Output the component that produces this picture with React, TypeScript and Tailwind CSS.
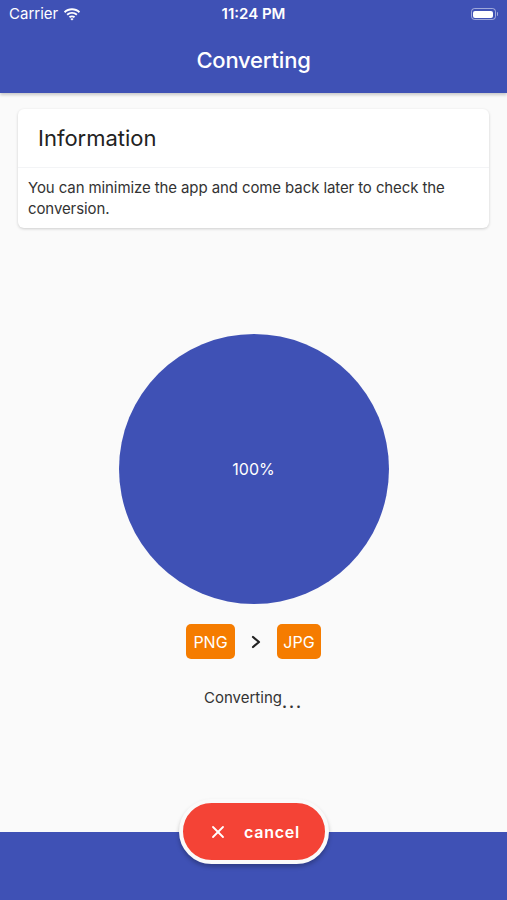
import { X } from 'lucide-react';

function StatusBar() {
  return (
    <div className="relative flex h-[28px] items-center justify-between px-[9px] text-white">
      <div className="flex items-center gap-[5px] text-[15px]">
        <span>Carrier</span>
        <svg width="18" height="13" viewBox="0 0 18 13" fill="white">
          <path d="M9 2.2c2.6 0 5 1 6.8 2.7l1.3-1.4C14.9 1.4 12.1.3 9 .3S3.1 1.4.9 3.5l1.3 1.4C4 3.2 6.4 2.2 9 2.2z" />
          <path d="M9 5.8c1.6 0 3.1.6 4.2 1.6l1.3-1.4C13 4.7 11.1 3.9 9 3.9S5 4.7 3.5 6l1.3 1.4C5.9 6.4 7.4 5.8 9 5.8z" />
          <path d="M9 9.3c.7 0 1.4.3 1.9.7l1.3-1.4C11.3 7.9 10.2 7.4 9 7.4s-2.3.5-3.2 1.2L7.1 10c.5-.4 1.2-.7 1.9-.7z" />
          <path d="M9 12.6l1.6-1.7c-.4-.4-1-.6-1.6-.6s-1.2.2-1.6.6z" />
        </svg>
      </div>
      <span className="absolute left-1/2 -translate-x-1/2 text-[15px] font-semibold">11:24 PM</span>
      <div className="flex items-center">
        <div className="h-[12px] w-[25px] rounded-[3.5px] border border-white/50 p-[1.5px]">
          <div className="h-full w-full rounded-[2px] bg-white" />
        </div>
        <div className="ml-[1px] h-[4px] w-[1.5px] rounded-r-sm bg-white/50" />
      </div>
    </div>
  );
}

export default function App() {
  return (
    <div
      className="relative flex h-[900px] w-full flex-col overflow-hidden bg-[#fafafa]"
      style={{ fontFamily: 'Inter, "Liberation Sans", sans-serif' }}
    >
      <div className="bg-[#3f51b5] shadow-[0_2px_3px_rgba(0,0,0,0.2)]">
        <StatusBar />
        <div className="flex h-[65px] items-center justify-center pb-[1px]">
          <h1 className="text-[22px] font-medium tracking-[-0.2px] text-white">Converting</h1>
        </div>
      </div>

      <div className="mx-[18px] mt-[16px] rounded-md bg-white shadow-[0_1px_3px_rgba(0,0,0,0.18)]">
        <div className="flex h-[59px] items-center border-b border-gray-100 px-[20px]">
          <h2 className="text-[22px] font-normal text-[#222]">Information</h2>
        </div>
        <p className="px-[10px] pb-[9px] pt-[9px] text-[15px] leading-[21px] tracking-[-0.1px] text-[#333]">
          You can minimize the app and come back later to check the conversion.
        </p>
      </div>

      <div className="mt-[106px] flex flex-col items-center">
        <div className="flex h-[270px] w-[270px] items-center justify-center rounded-full bg-[#3f51b5]">
          <span className="text-[16px] text-white">100%</span>
        </div>

        <div className="mt-[20px] flex items-center gap-[15px]">
          <div className="flex h-[35px] w-[49px] items-center justify-center rounded-[5px] bg-[#f57c00] text-[16px] text-white">
            PNG
          </div>
          <svg width="12" height="14" viewBox="0 0 12 14" fill="none" stroke="#222" strokeWidth="2.2" strokeLinecap="round" strokeLinejoin="round">
            <path d="M3 2l6 5-6 5" />
          </svg>
          <div className="flex h-[35px] w-[44px] items-center justify-center rounded-[5px] bg-[#f57c00] text-[16px] text-white">
            JPG
          </div>
        </div>

        <div className="mt-[28px] flex items-baseline text-[15px] text-[#333]">
          <span>Converting</span>
          <span className="translate-y-[5px] tracking-[2px] font-bold">...</span>
        </div>
      </div>

      <div className="mt-auto h-[68px] bg-[#3f51b5]" />

      <button className="absolute left-[179px] top-[799px] flex h-[65px] w-[150px] items-center justify-center gap-[16px] rounded-full border-4 border-[#fafafa] bg-[#f44336] text-white shadow-[0_3px_4px_rgba(0,0,0,0.25)]">
        <X className="h-[20px] w-[20px]" strokeWidth={2.2} />
        <span className="text-[16px] font-semibold tracking-[0.8px]">cancel</span>
      </button>
    </div>
  );
}
